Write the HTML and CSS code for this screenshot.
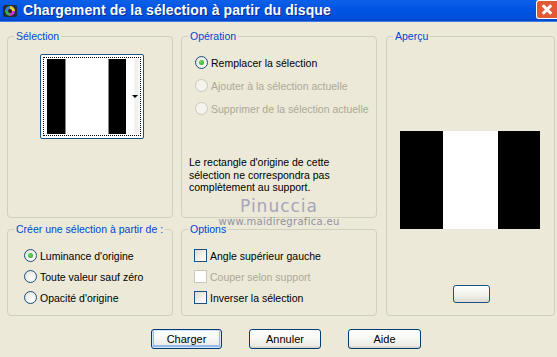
FILE: index.html
```html
<!DOCTYPE html>
<html lang="fr">
<head>
  <meta charset="UTF-8">
  <title>Chargement de la sélection à partir du disque</title>
  <link rel="stylesheet" href="styles.css">
</head>
<body>
<div class="window">
  <div class="titlebar">
    <svg class="app-icon" width="16" height="16" viewBox="0 0 16 16">
      <rect x="1" y="2" width="14" height="12" rx="2" fill="#2b2b2b"/>
      <circle cx="8" cy="8" r="5" fill="#1a1a1a"/>
      <path d="M8 3 A5 5 0 0 1 13 8 L8 8 Z" fill="#e3d23a"/>
      <path d="M13 8 A5 5 0 0 1 8 13 L8 8 Z" fill="#c03ad0"/>
      <path d="M8 13 A5 5 0 0 1 3 8 L8 8 Z" fill="#36b04a"/>
      <path d="M3 8 A5 5 0 0 1 8 3 L8 8 Z" fill="#3a7ee0"/>
      <circle cx="8" cy="8" r="2" fill="#222"/>
    </svg>
    <span class="title">Chargement de la sélection à partir du disque</span>
    <span class="shut"></span>
  </div>

  <div class="content">
    <div class="groups">
      <div class="group g-selection">
        <span class="group-title">Sélection</span>
        <div class="thumb">
          <div class="thumb-inner">
            <span class="stripe black"></span>
            <span class="stripe white"></span>
            <span class="stripe black2"></span>
            <span class="stripe rest"></span>
          </div>
          <span class="drop-arrow"></span>
        </div>
      </div>

      <div class="group g-operation">
        <span class="group-title">Opération</span>
        <div class="option-list op-list">
          <div class="option"><span class="radio checked"></span>Remplacer la sélection</div>
          <div class="option disabled"><span class="radio"></span>Ajouter à la sélection actuelle</div>
          <div class="option disabled"><span class="radio"></span>Supprimer de la sélection actuelle</div>
        </div>
        <p class="note">Le rectangle d'origine de cette sélection ne correspondra pas complètement au support.</p>
      </div>

      <div class="group g-preview">
        <span class="group-title">Aperçu</span>
        <div class="preview">
          <span class="pv black"></span>
          <span class="pv white"></span>
          <span class="pv black2"></span>
        </div>
        <div class="mini-btn"></div>
      </div>

      <div class="group g-create">
        <span class="group-title">Créer une sélection à partir de :</span>
        <div class="option-list create-list">
          <div class="option"><span class="radio checked"></span>Luminance d'origine</div>
          <div class="option"><span class="radio"></span>Toute valeur sauf zéro</div>
          <div class="option"><span class="radio"></span>Opacité d'origine</div>
        </div>
      </div>

      <div class="group g-options">
        <span class="group-title">Options</span>
        <div class="option-list opt-list">
          <div class="option"><span class="check"></span>Angle supérieur gauche</div>
          <div class="option disabled"><span class="check"></span>Couper selon support</div>
          <div class="option"><span class="check"></span>Inverser la sélection</div>
        </div>
      </div>
    </div>

    <div class="buttons">
      <button class="btn default">Charger</button>
      <button class="btn">Annuler</button>
      <button class="btn">Aide</button>
    </div>
  </div>

  <!-- filigrane -->
  <div class="watermark">
    <div class="wm-name">Pinuccia</div>
    <div class="wm-site">www.maidiregrafica.eu</div>
  </div>
</div>
</body>
</html>
```

FILE: styles.css
```css
body {
  margin: 0;
  padding: 0;
  background-color: #ece9d8;
  font-family: "Liberation Sans", Arial, sans-serif;
  font-size: 10.5px;
  color: #000;
}

.window {
  position: relative;
  width: 557px;
  height: 357px;
  background-color: #ece9d8;
}

.titlebar {
  position: relative;
  height: 21px;
  display: flex;
  align-items: center;
  background: linear-gradient(to bottom, #0a5ee8 0%, #0b5fe6 10%, #0054e3 40%, #0050dc 85%, #0046c8 100%);
  border-bottom: 1px solid #3d7be8;
  color: #fff;
}

.app-icon {
  flex-shrink: 0;
  margin-left: 2px;
  margin-right: 5px;
}

.title {
  font-family: "Liberation Sans", Arial, sans-serif;
  font-weight: bold;
  font-size: 14px;
  letter-spacing: 0.1px;
  text-shadow: 1px 1px 0 #0a2a8a;
  white-space: nowrap;
  margin-top: -1px;
}

/* bouton de fermeture, posé sur la barre de titre */
.shut {
  position: absolute;
  right: 0;
  top: 0;
  width: 21px;
  height: 19px;
  box-sizing: border-box;
  border: 1px solid #ffffff;
  border-right: 0;
  border-radius: 3px 0 0 3px;
  background: #e05a35;
}

.shut::before,
.shut::after {
  content: "";
  position: absolute;
  left: 4px;
  top: 7px;
  width: 12px;
  height: 3px;
  background: #ffffff;
  transform: rotate(45deg);
}

.shut::after {
  transform: rotate(-45deg);
}

.content {
  padding: 14px 0 0 7px;
}

.groups {
  display: grid;
  grid-template-columns: 166px 196px 169px;
  grid-template-rows: 182px 87px;
  column-gap: 8px;
  row-gap: 11px;
}

.group {
  border: 1px solid #d0d0bf;
  border-radius: 4px;
  box-sizing: border-box;
}

.group-title {
  display: block;
  width: fit-content;
  margin: -7px 0 0 6px;
  padding: 0 2px;
  line-height: 13px;
  white-space: nowrap;
  background-color: #ece9d8;
  color: #0046d5;
}

.g-selection { grid-column: 1; grid-row: 1; }
.g-operation { grid-column: 2; grid-row: 1; }
.g-preview { grid-column: 3; grid-row: 1 / span 2; margin-left: 1px; margin-right: -1px; }
.g-create { grid-column: 1; grid-row: 2; }
.g-options { grid-column: 2; grid-row: 2; }

/* vignette de la sélection */
.thumb {
  position: relative;
  width: 104px;
  height: 85px;
  margin: 11px 0 0 32px;
  border: 1px solid #1c5180;
  border-radius: 2px;
  background: #fff;
  box-sizing: border-box;
  padding: 2px;
}

.thumb-inner {
  height: 100%;
  border: 1px dotted #000;
  box-sizing: border-box;
  display: flex;
  padding: 1px 0 1px 3px;
}

.stripe { display: block; height: 100%; }
.stripe.black { width: 18px; background: #000; border-right: 1px solid #888; }
.stripe.white { width: 42px; background: #fff; border-right: 1px solid #888; }
.stripe.black2 { width: 17px; background: #000; }
.stripe.rest { width: 8px; background: #fff; border-right: 5px solid #f1f1ee; }

.drop-arrow {
  position: absolute;
  right: 5px;
  top: 40px;
  width: 0;
  height: 0;
  border-left: 3px solid transparent;
  border-right: 3px solid transparent;
  border-top: 3px solid #000;
}

/* boutons radio et cases */
.option-list {
  display: flex;
  flex-direction: column;
  gap: 8px;
}

.option {
  display: flex;
  align-items: center;
  height: 13px;
  white-space: nowrap;
}

.option.disabled { color: #aca899; }

.radio {
  width: 13px;
  height: 13px;
  border: 1px solid #1c5180;
  border-radius: 50%;
  box-sizing: border-box;
  background: radial-gradient(circle at 65% 65%, #ffffff 0%, #f4f3ee 40%, #dcdad0 100%);
  margin-right: 3px;
  flex-shrink: 0;
  position: relative;
}

.radio.checked::after {
  content: "";
  position: absolute;
  left: 3px;
  top: 3px;
  width: 5px;
  height: 5px;
  border-radius: 50%;
  background: radial-gradient(circle at 40% 40%, #6bd95a, #21a121);
}

.option.disabled .radio {
  border-color: #cac8bb;
  background: #f4f3ee;
}

.check {
  width: 13px;
  height: 13px;
  border: 1px solid #1c5180;
  box-sizing: border-box;
  background: linear-gradient(135deg, #dcdad0 0%, #f4f3ee 60%, #ffffff 100%);
  margin-right: 3px;
  flex-shrink: 0;
}

.option.disabled .check {
  border-color: #cac8bb;
  background: #fff;
}

.op-list { margin: 13px 0 0 13px; gap: 10px; }

.note {
  margin: 41px 0 0 7px;
  line-height: 12.5px;
  width: 180px;
}

.create-list { margin: 13px 0 0 16px; }
.opt-list { margin: 13px 0 0 12px; }

/* aperçu */
.preview {
  display: flex;
  margin: 88px 0 0 13px;
  height: 98px;
}

.pv { display: block; height: 100%; }
.pv.black { width: 43px; background: #000; }
.pv.white { width: 55px; background: #fff; }
.pv.black2 { width: 42px; background: #000; }

.mini-btn {
  width: 37px;
  height: 18px;
  margin: 56px 0 0 66px;
  border: 1px solid #1c5180;
  border-radius: 3px;
  box-sizing: border-box;
  background: linear-gradient(to bottom, #ffffff 0%, #f0f0ea 60%, #dcdcd4 100%);
}

/* boutons du bas */
.buttons {
  display: flex;
  gap: 27px;
  margin: 13px 0 0 144px;
}

.btn {
  height: 20px;
  width: 72px;
  padding: 0;
  font-family: "Liberation Sans", Arial, sans-serif;
  font-size: 11px;
  color: #000;
  border: 1px solid #003c74;
  border-radius: 3px;
  background: linear-gradient(to bottom, #ffffff 0%, #f6f6f2 50%, #ecebe6 85%, #d6d0c5 100%);
}

.btn.default {
  width: 71px;
  box-shadow: inset 0 0 0 1px #cee7ff, inset 0 -1px 0 2px #98b8ea;
}

.btn:last-child { width: 73px; }

/* filigrane */
.watermark {
  position: absolute;
  left: 218px;
  top: 196px;
  width: 122px;
  text-align: center;
  opacity: 0.85;
  pointer-events: none;
}

.wm-name {
  font-family: "DejaVu Sans", sans-serif;
  font-size: 17px;
  letter-spacing: 1px;
  line-height: 20px;
  color: #9c98b8;
}

.wm-site {
  font-family: "DejaVu Sans", sans-serif;
  font-size: 10px;
  line-height: 11px;
  letter-spacing: 0.3px;
  color: #858199;
}
```
